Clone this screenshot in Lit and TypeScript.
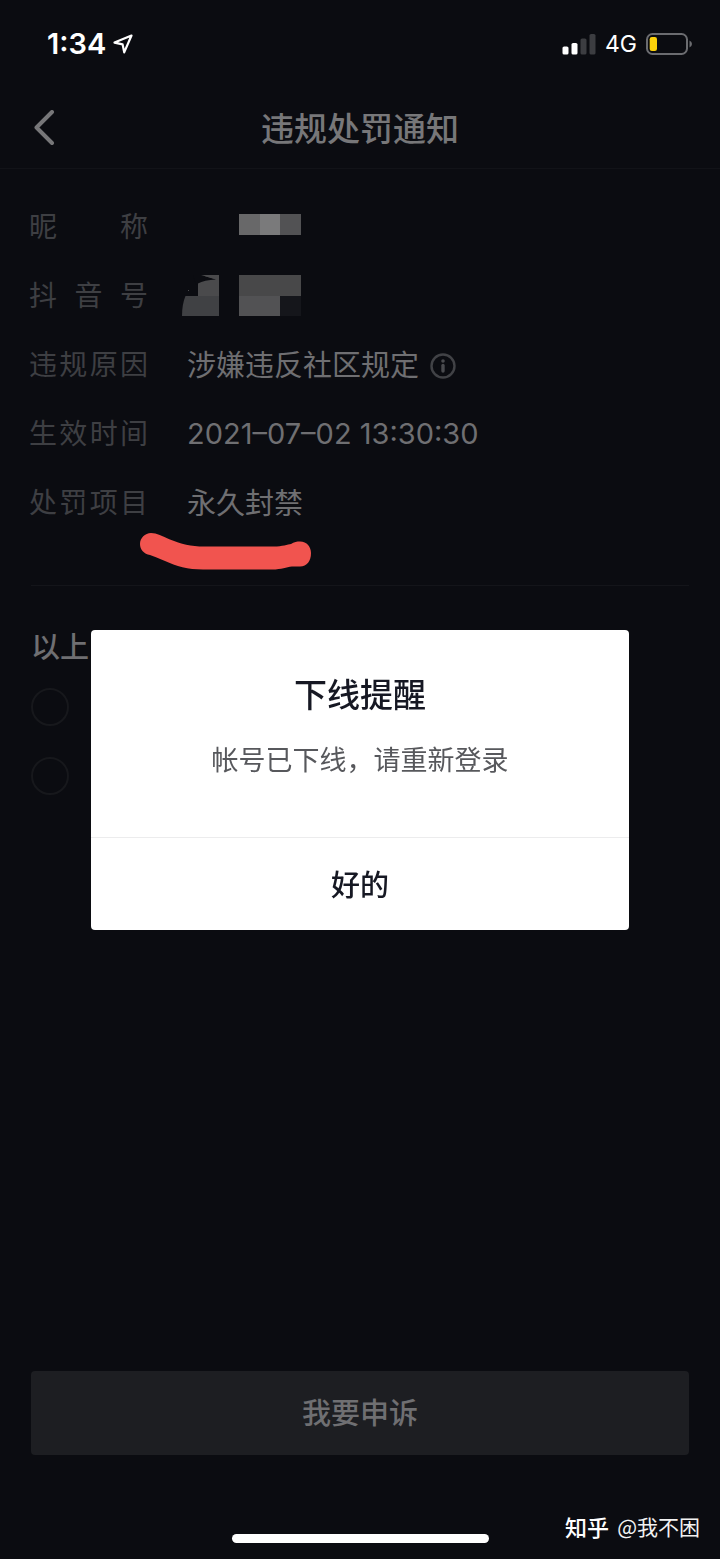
import { LitElement, html, css, svg } from "lit";
import { customElement, state } from "lit/decorators.js";

@customElement("status-bar")
class StatusBar extends LitElement {
  static styles = css`
    :host {
      display: flex;
      align-items: center;
      justify-content: space-between;
      height: 88px;
      padding: 0 27px 0 47px;
      color: #fff;
      font-family: Inter, "Noto Sans CJK SC", sans-serif;
    }
    .group {
      display: flex;
      align-items: center;
    }
    .left {
      gap: 7px;
    }
    .right {
      gap: 9px;
    }
    .time {
      font-size: 29px;
      font-weight: 600;
      line-height: 32px;
    }
    .network {
      font-size: 23px;
      line-height: 32px;
    }
    svg {
      display: block;
    }
  `;

  render() {
    return html`
      <div class="group left">
        <span class="time">1:34</span>
        <svg width="20" height="20" viewBox="0 0 20 20" fill="none" stroke="#fff" stroke-width="2.200" stroke-linejoin="round" aria-hidden="true">
          <path d="M18.500 1.500 L1.500 8.600 L9.600 10.400 L11.200 18.400 Z" />
        </svg>
      </div>
      <div class="group right">
        <svg width="34" height="22" viewBox="0 0 34 22" aria-hidden="true">
          <rect x="0.500" y="13.500" width="6" height="8" rx="1.600" fill="#fff" />
          <rect x="9.500" y="10" width="6" height="11.500" rx="1.600" fill="#fff" />
          <rect x="18.500" y="5.500" width="6" height="16" rx="1.600" fill="#3c3d41" />
          <rect x="27.500" y="1" width="6" height="20.500" rx="1.600" fill="#3c3d41" />
        </svg>
        <span class="network">4G</span>
        <svg width="47" height="22" viewBox="0 0 47 22" aria-hidden="true">
          <rect x="1" y="1" width="40" height="20" rx="5.500" fill="none" stroke="#6b6c70" stroke-width="2" />
          <rect x="3.700" y="4" width="7.300" height="14" rx="2.200" fill="#fdd20a" />
          <path d="M43.500 7.500 Q46 8.800 46 11 Q46 13.200 43.500 14.500 Z" fill="#6b6c70" />
        </svg>
      </div>
    `;
  }
}

@customElement("offline-dialog")
class OfflineDialog extends LitElement {
  static styles = css`
    :host {
      position: fixed;
      inset: 0;
      display: grid;
      align-items: center;
      padding: 0 91px;
    }
    .dialog {
      display: flex;
      flex-direction: column;
      background: #fff;
      border-radius: 4px;
      overflow: hidden;
      text-align: center;
    }
    .body {
      padding: 39px 20px 58px;
    }
    .title {
      margin: 0;
      color: #161823;
      font-size: 33px;
      font-weight: 500;
      line-height: 48px;
    }
    .message {
      margin: 22px 0 0;
      color: #57585c;
      font-size: 27px;
      line-height: 40px;
    }
    .confirm {
      height: 93px;
      padding: 0 0 2px;
      border: 0;
      border-top: 1px solid #ececed;
      background: none;
      color: #161823;
      font: inherit;
      font-size: 29px;
      font-weight: 500;
    }
  `;

  render() {
    return html`
      <div class="dialog" role="alertdialog" aria-labelledby="title" aria-describedby="message">
        <div class="body">
          <h2 class="title" id="title">下线提醒</h2>
          <p class="message" id="message">帐号已下线，请重新登录</p>
        </div>
        <button class="confirm" type="button">好的</button>
      </div>
    `;
  }
}

const nameMosaic = svg`
  <rect x="52" y="10" width="21" height="21" fill="#686869" />
  <rect x="73" y="10" width="20" height="21" fill="#7a7a7b" />
  <rect x="93" y="10" width="21" height="21" fill="#525254" />
`;

const idMosaic = svg`
  <path d="M11 8 L20 2 L32 2 L32 23 L11 23 Z" fill="#4a4a4c" />
  <path d="M-5 43 Q-5 31 -1.500 23 L32 23 L32 43 Z" fill="#404144" />
  <path d="M6 2 L14 2 L29 6.500 Q17 7 11 10.500 L9 12 Z" fill="#0b0c11" />
  <path d="M14 2 L28 6 L28 2 Z" fill="#4a4a4c" />
  <rect x="1" y="17" width="1" height="1" fill="#4a4a4c" />
  <rect x="52" y="2" width="62" height="21" fill="#484849" />
  <rect x="52" y="23" width="41" height="20" fill="#525254" />
  <rect x="93" y="23" width="21" height="20" fill="#15161b" />
`;

@customElement("app-root")
class AppRoot extends LitElement {
  static styles = css`
    :host {
      display: flex;
      flex-direction: column;
      min-height: 100vh;
      background: #0b0c11;
      color: #6f6f72;
      font-family: "Noto Sans CJK SC", sans-serif;
    }
    svg {
      display: block;
    }
    .header {
      display: grid;
      grid-template-columns: 58px 1fr 58px;
      align-items: center;
      height: 80px;
      border-bottom: 1px solid #121318;
    }
    .back {
      display: grid;
      place-items: center end;
      height: 80px;
      padding: 0 2px 0 0;
      border: 0;
      background: none;
    }
    .heading {
      margin: 0;
      padding-bottom: 2px;
      color: #777779;
      font-size: 33px;
      font-weight: 500;
      line-height: 48px;
      text-align: center;
    }
    .details {
      margin: 0;
      padding: 22px 29px 49px;
    }
    .row {
      position: relative;
      display: flex;
      align-items: center;
      gap: 39px;
      height: 69px;
    }
    .label {
      width: 119px;
      padding-bottom: 2px;
      color: #3e3f43;
      font-size: 28px;
      line-height: 42px;
      text-align-last: justify;
    }
    .value {
      display: flex;
      align-items: center;
      gap: 11px;
      margin: 0;
      padding-bottom: 2px;
      font-size: 29px;
      line-height: 42px;
    }
    .date {
      padding: 2px 0 0;
      font-family: Inter, "Noto Sans CJK SC", sans-serif;
    }
    .mosaic {
      overflow: visible;
    }
    .info {
      margin-top: 6px;
      padding: 0;
      border: 0;
      background: none;
    }
    .marker {
      position: absolute;
      left: 110px;
      top: 61px;
    }
    .reasons {
      flex: 1;
      margin: 0 31px;
      padding: 38px 0 0;
      border: 0;
      border-top: 1px solid #14151a;
    }
    .question {
      margin: 0 0 6px;
      font-size: 29px;
      font-weight: 500;
      line-height: 42px;
    }
    .option {
      display: flex;
      align-items: center;
      height: 69px;
    }
    .radio {
      appearance: none;
      width: 38px;
      height: 38px;
      margin: 0;
      border: 2px solid #17181c;
      border-radius: 50%;
    }
    .appeal {
      height: 84px;
      margin: 0 31px;
      padding: 0 0 4px;
      border: 0;
      border-radius: 4px;
      background: #1d1e22;
      color: #6f6f72;
      font: inherit;
      font-size: 29px;
      font-weight: 500;
    }
    .footer {
      position: relative;
      display: flex;
      align-items: flex-end;
      justify-content: center;
      height: 88px;
      padding-bottom: 16px;
    }
    .home {
      width: 257px;
      height: 9px;
      border-radius: 5px;
      background: #fff;
    }
    .credit {
      position: absolute;
      right: 20px;
      bottom: 17px;
      display: flex;
      gap: 8px;
      color: #f2f2f2;
      font-size: 21px;
      line-height: 32px;
    }
    .brand {
      color: #fff;
      font-size: 22px;
      font-weight: 500;
    }
  `;

  @state() private choice = -1;

  render() {
    return html`
      <status-bar></status-bar>
      <header class="header">
        <button class="back" type="button" aria-label="返回">
          <svg width="22" height="36" viewBox="0 0 22 36" fill="none" stroke="#777779" stroke-width="4" stroke-linecap="round" stroke-linejoin="round">
            <path d="M18 2 L2.500 17.500 L18 33" />
          </svg>
        </button>
        <h1 class="heading">违规处罚通知</h1>
      </header>
      <dl class="details">
        <div class="row">
          <dt class="label">昵称</dt>
          <dd class="value"><svg class="mosaic" width="114" height="42" viewBox="0 0 114 42">${nameMosaic}</svg></dd>
        </div>
        <div class="row">
          <dt class="label">抖音号</dt>
          <dd class="value"><svg class="mosaic" width="114" height="42" viewBox="0 0 114 42">${idMosaic}</svg></dd>
        </div>
        <div class="row">
          <dt class="label">违规原因</dt>
          <dd class="value">
            涉嫌违反社区规定
            <button class="info" type="button" aria-label="说明">
              <svg width="26" height="26" viewBox="0 0 26 26">
                <circle cx="13" cy="13" r="11.500" fill="none" stroke="#414246" stroke-width="2.400" />
                <circle cx="13" cy="8" r="1.800" fill="#4a4b4f" />
                <path d="M13 12.500 V18" stroke="#4a4b4f" stroke-width="3.400" stroke-linecap="round" />
              </svg>
            </button>
          </dd>
        </div>
        <div class="row">
          <dt class="label">生效时间</dt>
          <dd class="value date">2021–07–02 13:30:30</dd>
        </div>
        <div class="row">
          <dt class="label">处罚项目</dt>
          <dd class="value">永久封禁</dd>
          <svg class="marker" width="174" height="42" viewBox="0 0 174 42" aria-hidden="true">
            <path
              d="M12 5 C18 5 23 8 31 11.500 C42 16 52 18.500 65 18.500 H135 C143 18.500 149 16.500 152 16 C155 14 158 13.500 161 13.500 C168 13.500 172 19 172 25 C172 33 168 38.500 161 38.500 H153 C147 39 143 41.500 133 41.500 H64 C49 41.500 37 38 26 33 C19 30 14 28 11 27 C5 26 1 21.500 1 16 C1 10 6 5 12 5 Z"
              fill="#f1544f"
            />
          </svg>
        </div>
      </dl>
      <section class="reasons" role="radiogroup" aria-labelledby="question">
        <h2 class="question" id="question">以上</h2>
        ${[0, 1].map(
          (index) => html`
            <div class="option">
              <input
                class="radio"
                type="radio"
                name="reason"
                aria-label="选项 ${index + 1}"
                .checked=${this.choice === index}
                @change=${() => (this.choice = index)}
              />
            </div>
          `
        )}
      </section>
      <button class="appeal" type="button">我要申诉</button>
      <footer class="footer">
        <div class="home"></div>
        <div class="credit"><span class="brand">知乎</span><span>@我不困</span></div>
      </footer>
      <offline-dialog></offline-dialog>
    `;
  }
}
